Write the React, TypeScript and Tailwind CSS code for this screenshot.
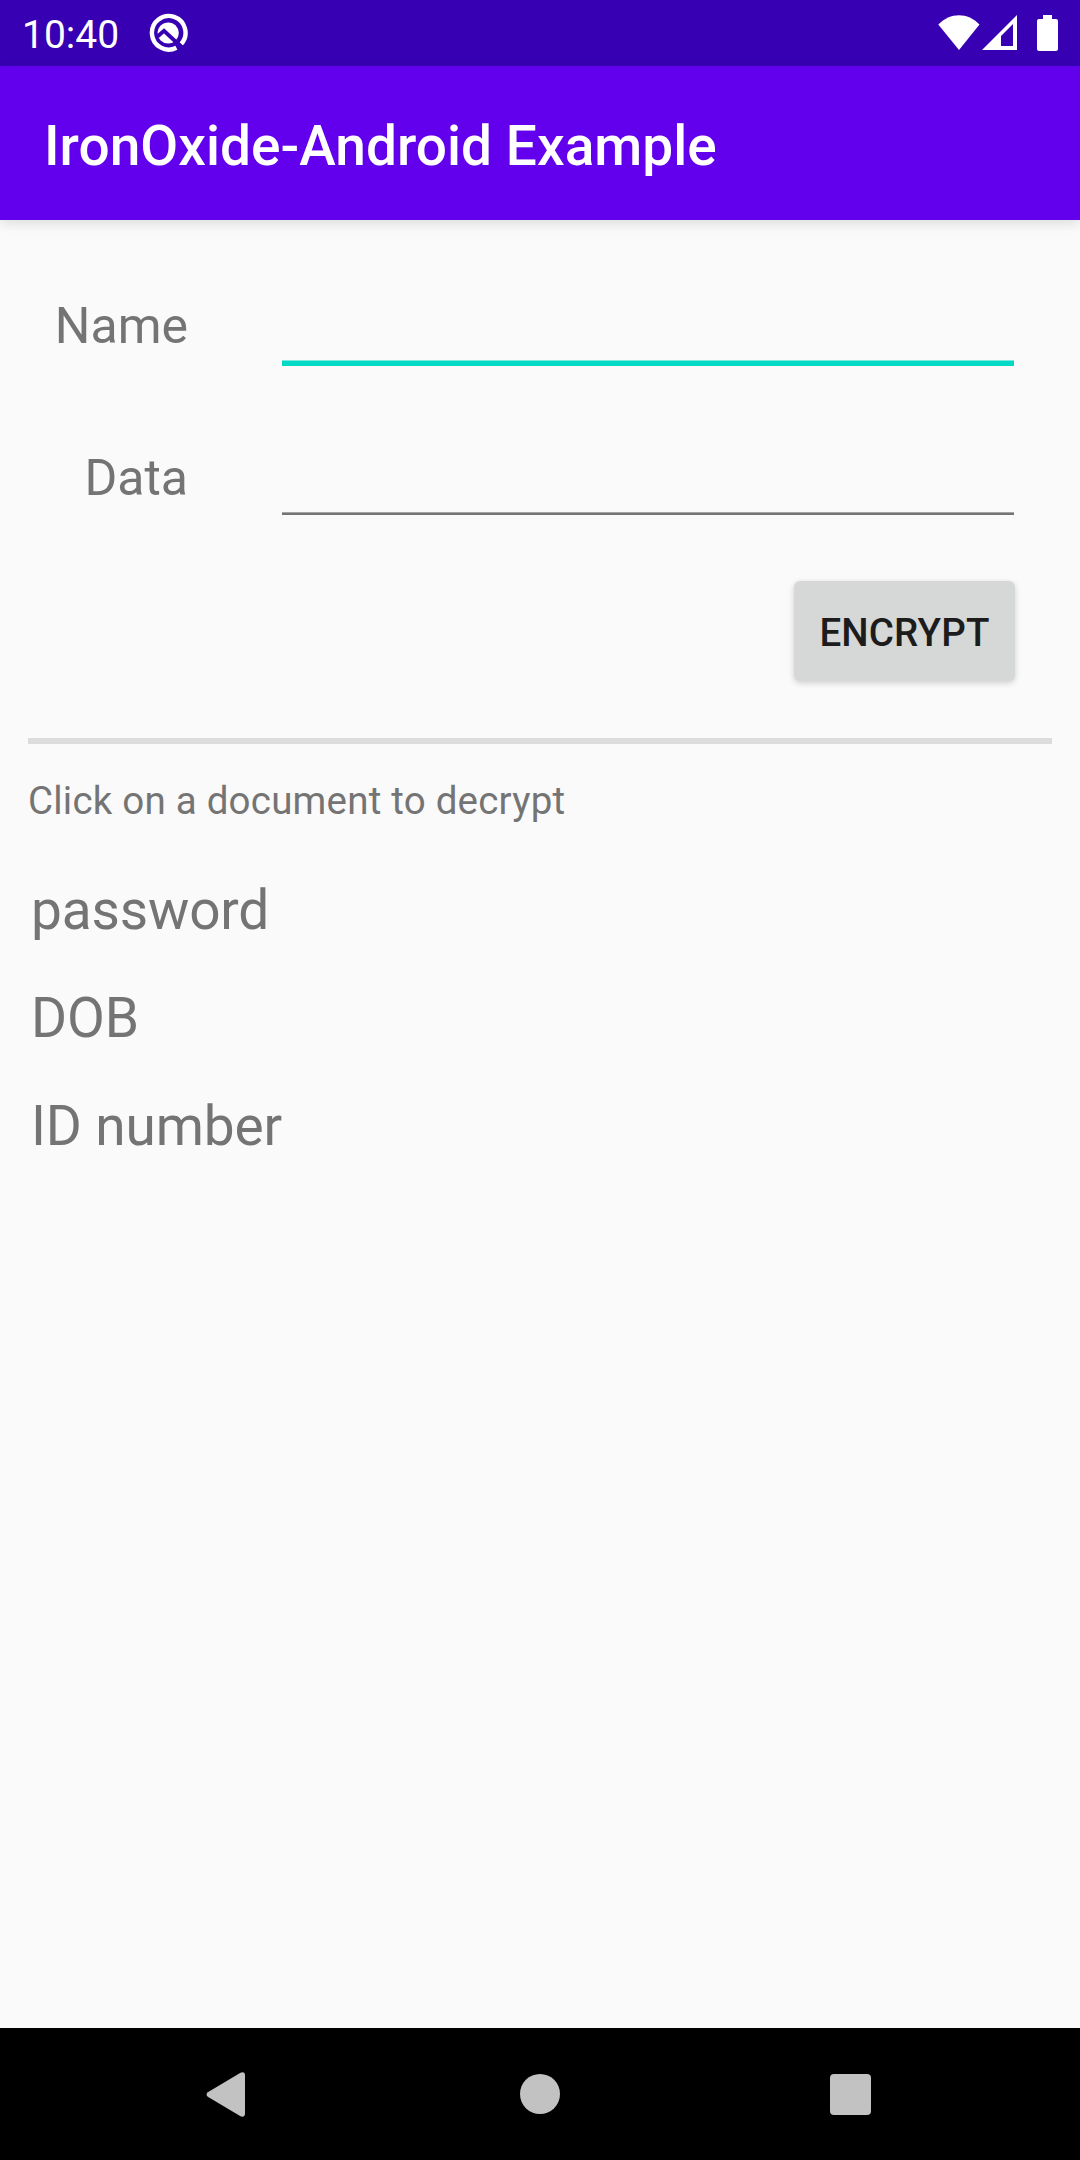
import React from "react";

function StatusBar() {
  return (
    <div className="flex h-[66px] items-start bg-[#3700b3] text-white">
      <span className="ml-[22px] mt-[10px] w-[126px] text-[39px] leading-[50px]">10:40</span>
      <svg className="mt-[13px] h-10 w-10" viewBox="0 0 40 40" fill="none">
        <path d="M33.2 31 A16.8 16.8 0 1 0 28.4 34.7" stroke="white" strokeWidth="4.4" />
        <circle cx="20.2" cy="20" r="10.6" fill="white" />
        <path d="M9.5 23.5 L16 17.8 L34 34.5" stroke="#3700b3" strokeWidth="3.8" />
      </svg>
      <div className="ml-auto flex pr-[22px]">
        <svg className="mt-[15px] h-[35px] w-[42px]" viewBox="0 0 42 35">
          <path d="M0.3 9.5 C12 -3 30 -3 41.5 9.5 L21 35 Z" fill="white" />
        </svg>
        <svg className="ml-[2px] mt-[15px] h-[35px] w-[35px]" viewBox="0 0 35 35">
          <path fillRule="evenodd" d="M0 35 L35 0 V35 Z M19 21 V31 H31 V9 Z" fill="white" />
        </svg>
        <svg className="ml-5 mt-[15px] h-9 w-[21px]" viewBox="0 0 21 36">
          <path d="M6 0 H15 V4 H19 Q21 4 21 6 V34 Q21 36 19 36 H2 Q0 36 0 34 V6 Q0 4 2 4 H6 Z" fill="white" />
        </svg>
      </div>
    </div>
  );
}

function Field({ label, focused }: { label: string; focused?: boolean }) {
  return (
    <div className="flex h-[76px] items-start">
      <label className="w-[188px] text-right text-[50px] leading-[72px]">{label}</label>
      <div className="ml-[94px] flex h-full w-[732px] flex-col justify-end">
        {focused ? (
          <div className="h-[6px] border-t border-[#7de9de] bg-[#03dac5]" />
        ) : (
          <div className="mb-[3px] h-[3px] border-t border-[#a4a4a4] bg-[#747474]" />
        )}
      </div>
    </div>
  );
}

const documents = ["password", "DOB", "ID number"];

export default function App() {
  return (
    <div className="flex h-[2160px] w-[1080px] flex-col overflow-hidden bg-[#fafafa] font-['Roboto',sans-serif] text-[#747474]">
      <StatusBar />
      <header className="flex h-[154px] items-center bg-[#6200ee] px-11 pt-[6px] text-[55px] font-medium text-white shadow-[0_3px_12px_rgba(0,0,0,0.13)]">
        <h1 className="tracking-[0.04px]">IronOxide-Android Example</h1>
      </header>
      <main className="flex flex-1 flex-col pt-[70px]">
        <Field label="Name" focused />
        <div className="h-[76px]" />
        <Field label="Data" />
        <button className="mr-[65px] mt-[63px] h-[100px] w-[221px] self-end rounded-[6px] bg-[#d6d7d7] pt-[3px] text-[38.5px] font-medium tracking-[0.15px] text-[#1c1c1c] shadow-[0_2px_6px_rgba(0,0,0,0.18)]">
          ENCRYPT
        </button>
        <hr className="mx-7 mt-[57px] h-[6px] border-0 bg-[#dcdcdc]" />
        <p className="ml-7 mt-[32px] text-[38.5px] leading-[50px] tracking-[0.22px]">Click on a document to decrypt</p>
        <ul className="ml-[31px] mt-[30px] text-[55px] leading-[108px] tracking-[-0.15px]">
          {documents.map((name) => (
            <li key={name}>{name}</li>
          ))}
        </ul>
      </main>
      <nav className="flex h-[132px] items-start bg-black">
        <svg className="ml-[206px] mt-11 h-[45px] w-[39px]" viewBox="0 0 39 45">
          <path d="M1.8 20.2 L34.5 0.8 Q39 -0.8 39 3.5 V41.5 Q39 45.8 34.5 44.2 L1.8 24.8 Q-0.6 22.5 1.8 20.2 Z" fill="#c2c2c2" />
        </svg>
        <div className="ml-[275px] mt-[46px] size-10 rounded-full bg-[#c2c2c2]" />
        <div className="ml-[270px] mt-[46px] size-[41px] rounded-[4px] bg-[#c2c2c2]" />
      </nav>
    </div>
  );
}
